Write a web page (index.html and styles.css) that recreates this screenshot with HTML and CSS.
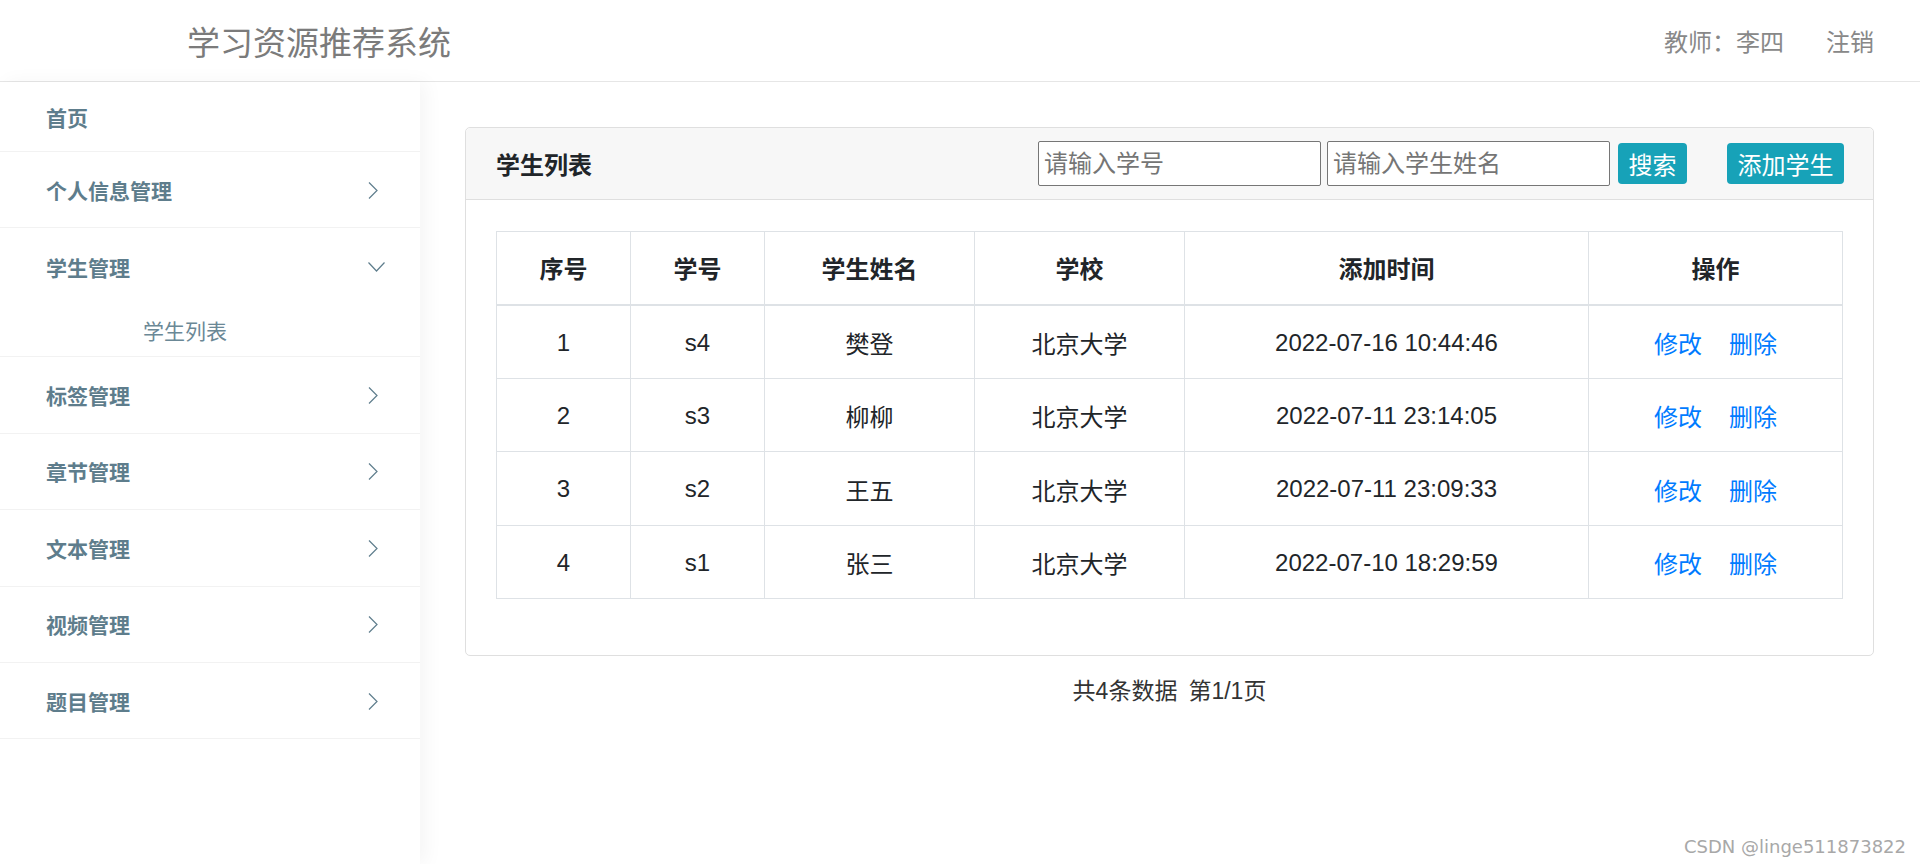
FILE: index.html
```html
<!DOCTYPE html>
<html lang="zh-CN">
<head>
<meta charset="utf-8">
<title>学习资源推荐系统</title>
<link rel="stylesheet" href="styles.css">
</head>
<body>
<header class="topbar">
  <div class="brand">学习资源推荐系统</div>
  <div class="user">
    <span class="user-name">教师：李四</span>
    <a class="logout">注销</a>
  </div>
</header>
<div class="layout">
  <aside class="sidebar">
    <div class="nav-item nav-home"><span>首页</span></div>
    <div class="nav-item"><span>个人信息管理</span>
      <svg class="chev" viewBox="0 0 18 18"><path d="M1 1.5 L9 9.5 L1 17.5"/></svg></div>
    <div class="nav-group">
      <div class="nav-item nav-open"><span>学生管理</span>
        <svg class="chev" viewBox="0 0 18 18"><path d="M0.5 4.5 L8.5 13 L16.5 4.5"/></svg></div>
      <div class="nav-sub">学生列表</div>
    </div>
    <div class="nav-item"><span>标签管理</span>
      <svg class="chev" viewBox="0 0 18 18"><path d="M1 1.5 L9 9.5 L1 17.5"/></svg></div>
    <div class="nav-item"><span>章节管理</span>
      <svg class="chev" viewBox="0 0 18 18"><path d="M1 1.5 L9 9.5 L1 17.5"/></svg></div>
    <div class="nav-item"><span>文本管理</span>
      <svg class="chev" viewBox="0 0 18 18"><path d="M1 1.5 L9 9.5 L1 17.5"/></svg></div>
    <div class="nav-item"><span>视频管理</span>
      <svg class="chev" viewBox="0 0 18 18"><path d="M1 1.5 L9 9.5 L1 17.5"/></svg></div>
    <div class="nav-item"><span>题目管理</span>
      <svg class="chev" viewBox="0 0 18 18"><path d="M1 1.5 L9 9.5 L1 17.5"/></svg></div>
  </aside>
  <main class="main">
    <section class="card">
      <div class="card-header">
        <h2 class="card-title">学生列表</h2>
        <div class="tools">
          <input class="field" type="text" placeholder="请输入学号">
          <input class="field" type="text" placeholder="请输入学生姓名">
          <button class="btn btn-search">搜索</button>
          <button class="btn btn-add">添加学生</button>
        </div>
      </div>
      <div class="card-body">
        <table class="table">
          <colgroup>
            <col class="c1"><col class="c2"><col class="c3"><col class="c4"><col class="c5"><col class="c6">
          </colgroup>
          <thead>
            <tr><th>序号</th><th>学号</th><th>学生姓名</th><th>学校</th><th>添加时间</th><th>操作</th></tr>
          </thead>
          <tbody>
            <tr><td>1</td><td>s4</td><td>樊登</td><td>北京大学</td><td>2022-07-16 10:44:46</td><td><a class="op">修改</a><a class="op">删除</a></td></tr>
            <tr><td>2</td><td>s3</td><td>柳柳</td><td>北京大学</td><td>2022-07-11 23:14:05</td><td><a class="op">修改</a><a class="op">删除</a></td></tr>
            <tr><td>3</td><td>s2</td><td>王五</td><td>北京大学</td><td>2022-07-11 23:09:33</td><td><a class="op">修改</a><a class="op">删除</a></td></tr>
            <tr><td>4</td><td>s1</td><td>张三</td><td>北京大学</td><td>2022-07-10 18:29:59</td><td><a class="op">修改</a><a class="op">删除</a></td></tr>
          </tbody>
        </table>
      </div>
    </section>
    <div class="pager"><span>共4条数据</span><span class="page-no">第1/1页</span></div>
  </main>
</div>
<div class="watermark">CSDN @linge511873822</div>
</body>
</html>
```
FILE: styles.css
```css
* { box-sizing: border-box; }
html, body { margin: 0; padding: 0; }
body {
  font-family: "Liberation Sans", "Noto Sans CJK SC", sans-serif;
  color: #212529;
  background: #fff;
  width: 1920px;
  height: 864px;
  overflow: hidden;
}

.topbar {
  height: 82px;
  border-bottom: 1px solid #e6e6e6;
  display: flex;
  align-items: center;
  justify-content: space-between;
}
.brand {
  margin-left: 187px;
  font-size: 33px;
  color: #7b7b7b;
}
.user {
  display: flex;
  align-items: center;
  gap: 42px;
  margin-right: 46px;
  font-size: 24px;
  color: #888;
}
.logout { color: #888; cursor: pointer; }

.layout { display: flex; height: 782px; }

.sidebar {
  width: 420px;
  flex: none;
  background: #fff;
  box-shadow: 6px 0 18px rgba(0, 0, 0, 0.045);
  position: relative;
  z-index: 1;
}
.nav-item {
  height: 76.4px;
  border-bottom: 1px solid #f2f2f2;
  display: flex;
  align-items: center;
  padding-left: 46px;
  font-size: 21px;
  font-weight: bold;
  color: #5e7d8c;
}
.nav-item span { flex: 1; }
.nav-home { height: 70px; }
.nav-group { border-bottom: 1px solid #f2f2f2; }
.nav-open { height: 77px; border-bottom: none; }
.chev {
  width: 18px;
  height: 18px;
  margin-right: 34px;
  fill: none;
  stroke: #5e7d8c;
  stroke-width: 1.2;
}
.nav-sub {
  height: 51px;
  display: flex;
  align-items: center;
  padding-left: 143px;
  padding-bottom: 2px;
  font-size: 21px;
  color: #6b8896;
}

.main {
  flex: 1;
  padding: 45px 46px 0 45px;
}
.card {
  border: 1px solid #dfdfdf;
  border-radius: 5px;
  background: #fff;
}
.card-header {
  height: 72px;
  background: #f7f7f7;
  border-bottom: 1px solid #dfdfdf;
  border-radius: 5px 5px 0 0;
  display: flex;
  align-items: center;
  justify-content: space-between;
  padding: 0 29px 0 30px;
}
.card-title {
  margin: 0;
  font-size: 24px;
  font-weight: bold;
  color: #212529;
}
.tools { display: flex; align-items: center; }
.field {
  width: 283px;
  height: 45px;
  margin-left: 6px;
  border: 1px solid #767676;
  border-radius: 2px;
  padding: 0 5px;
  font-family: inherit;
  font-size: 24px;
  color: #333;
  background: #fff;
}
.field::placeholder { color: #757575; }
.btn {
  height: 41px;
  border: none;
  border-radius: 4px;
  background: #17a2b8;
  color: #fff;
  font-family: inherit;
  font-size: 24px;
  padding: 0;
  cursor: pointer;
}
.btn-search { width: 69px; margin-left: 8px; }
.btn-add { width: 117px; margin-left: 40px; }

.card-body { padding: 31px 30px 56px 30px; }
.table {
  width: 100%;
  border-collapse: collapse;
  border: 1px solid #dee2e6;
  font-size: 24px;
  color: #212529;
}
.c1, .c2 { width: 134px; }
.c3, .c4 { width: 210px; }
.c5 { width: 404px; }
.c6 { width: 254px; }
.table th, .table td {
  border: 1px solid #dee2e6;
  text-align: center;
  vertical-align: middle;
}
.table th {
  height: 73px;
  border-bottom: 2px solid #dee2e6;
  font-weight: bold;
}
.table td { height: 73.5px; padding-top: 3px; }
.op {
  color: #007bff;
  cursor: pointer;
}
.op + .op { margin-left: 27px; }

.pager {
  margin-top: 16px;
  text-align: center;
  font-size: 23px;
  color: #333;
}
.page-no { margin-left: 11px; }

.watermark {
  position: absolute;
  right: 14px;
  bottom: 7px;
  font-family: "DejaVu Sans", sans-serif;
  font-size: 18px;
  color: #a8a8a8;
}
```
